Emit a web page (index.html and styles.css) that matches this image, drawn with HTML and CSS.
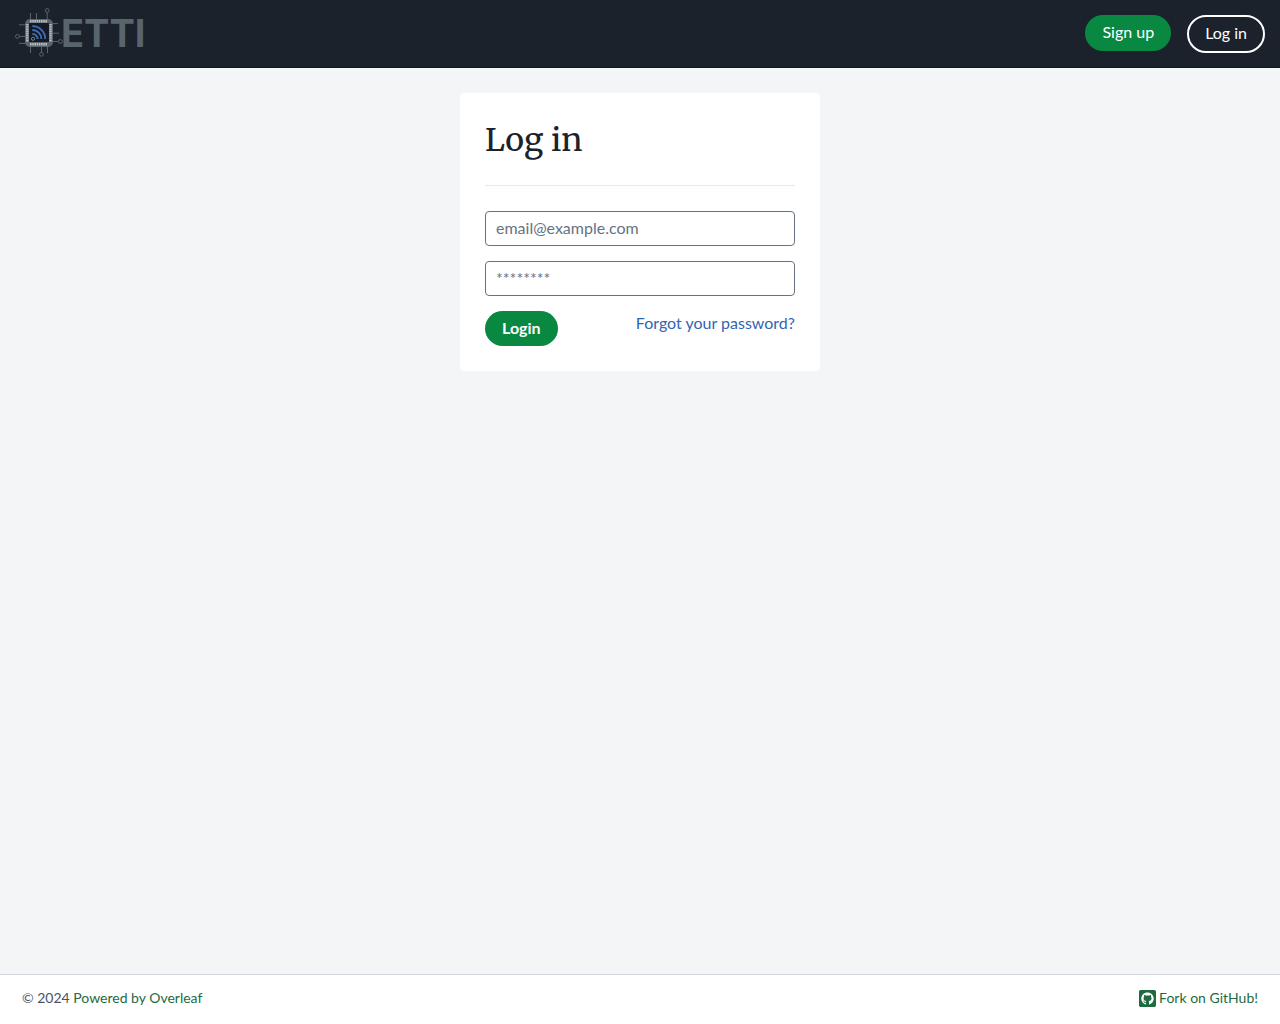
FILE: index.html
```html
<!DOCTYPE html>
<html lang="en">
<head>
    <meta charset="UTF-8">
    <meta name="viewport" content="width=device-width, initial-scale=1">
    <title>Log in - ETTI</title>
    <link rel="stylesheet" href="styles.css">
</head>
<body>
    <header class="navbar">
        <a class="navbar-brand" href="/" aria-label="ETTI">
            <svg class="logo" viewBox="15 6 130 54" width="130" height="54">
                <!-- traces -->
                <g fill="none" stroke="#59656c" stroke-width="1">
                    <path d="M30.5 13v7M36.5 13v7M47.2 12.5v7M30.5 46v7M41.5 46v6M47.5 46v7"/>
                    <path d="M19 24.8h7M19.5 36.4h6M19 43.4h7M51 23.6h7M51 33.2h8M51 41.5h7"/>
                    <circle cx="47.2" cy="10.5" r="1.9"/>
                    <circle cx="17.4" cy="36.4" r="1.9"/>
                    <circle cx="60.4" cy="41.5" r="1.9"/>
                    <circle cx="41.5" cy="54.3" r="1.9"/>
                </g>
                <!-- chip -->
                <rect x="25" y="19" width="28" height="28" rx="5" fill="#59656c"/>
                <rect x="29" y="23" width="20" height="19" fill="#151a24"/>
                <g fill="none" stroke="#b4bbbe" stroke-width="2.5" stroke-dasharray="1.6 .6">
                    <path d="M30 21.3h17.5M30 44.3h17.5M27.3 24v18M50.5 24v18"/>
                </g>
                <g fill="none" stroke="#3e70bd" stroke-width="1.8">
                    <path d="M32.3 26.2A12.6 12.6 0 0 1 45.2 39"/>
                    <path d="M32.3 30A9 9 0 0 1 41.4 39"/>
                    <path d="M32.3 33.8A5.3 5.3 0 0 1 37.7 39"/>
                </g>
                <circle cx="33" cy="38.8" r="1.6" fill="#151a24" stroke="#75828a"/>
                <text class="logo-text" x="61" y="47">ETTI</text>
            </svg>
        </a>
        <nav class="navbar-links">
            <a class="btn btn-primary" href="/register">Sign up</a>
            <a class="btn btn-outline" href="/login">Log in</a>
        </nav>
    </header>

    <main class="content">
        <div class="card">
            <h1 class="page-header">Log in</h1>
            <form class="login-form" action="/login" method="post">
                <input class="form-control" type="email" name="email" placeholder="email@example.com" aria-label="Email">
                <input class="form-control" type="password" name="password" placeholder="********" aria-label="Password">
                <div class="actions">
                    <button class="btn btn-primary btn-login" type="submit">Login</button>
                    <a class="forgot" href="/user/password/reset">Forgot your password?</a>
                </div>
            </form>
        </div>
    </main>

    <footer class="site-footer">
        <div>© 2024 <a href="https://www.overleaf.com">Powered by Overleaf</a></div>
        <a class="fork" href="https://github.com/overleaf/overleaf">
            <svg viewBox="0 32 448 448" width="17" height="17" aria-hidden="true"><path fill="currentColor" d="M400 32H48C21.5 32 0 53.5 0 80v352c0 26.5 21.5 48 48 48h352c26.5 0 48-21.5 48-48V80c0-26.5-21.5-48-48-48zM277.3 415.7c-8.4 1.5-11.5-3.7-11.5-8 0-5.4.2-33 .2-55.3 0-15.6-5.2-25.5-11.3-30.7 37-4.1 76-9.2 76-73.1 0-18.2-6.5-27.3-17.1-39 1.7-4.3 7.4-22-1.7-45-13.9-4.3-45.7 17.9-45.7 17.9-13.2-3.7-27.5-5.6-41.6-5.6-14.1 0-28.4 1.9-41.6 5.6 0 0-31.8-22.2-45.7-17.9-9.1 22.9-3.5 40.6-1.7 45-10.6 11.7-15.6 20.8-15.6 39 0 63.6 37.3 69 74.3 73.1-4.8 4.3-9.1 11.7-10.6 22.3-9.5 4.3-33.8 11.7-48.3-13.9-9.1-15.8-25.5-17.1-25.5-17.1-16.2-.2-1.1 10.2-1.1 10.2 10.8 5 18.4 24.2 18.4 24.2 9.7 29.7 56.1 19.7 56.1 19.7 0 13.9.2 36.5.2 40.6 0 4.3-3 9.5-11.5 8-66-22.1-112.2-84.9-112.2-158.3 0-91.8 70.2-161.5 162-161.5S388 165.6 388 257.4c.1 73.4-44.7 136.3-110.7 158.3z"/></svg>
            <span>Fork on GitHub!</span>
        </a>
    </footer>
</body>
</html>
```
FILE: styles.css
```css
* {
    box-sizing: border-box;
}

body {
    margin: 0;
    min-height: 100vh;
    display: flex;
    flex-direction: column;
    background: #f4f5f6;
    color: #495365;
    font-family: Lato, sans-serif;
    font-size: 16px;
    line-height: 24px;
}

a {
    text-decoration: none;
}

.navbar {
    display: flex;
    justify-content: space-between;
    align-items: flex-start;
    min-height: 68px;
    padding: 6px 15px;
    background: #1b222c;
    border-bottom: 1px solid #121820;
}

.navbar-brand,
.logo {
    display: block;
}

.logo-text {
    fill: #59656c;
    font-family: Inter, sans-serif;
    font-size: 38px;
    font-weight: 700;
}

.navbar-links {
    display: flex;
    align-items: flex-start;
    gap: 16px;
    padding-top: 9px;
}

.btn {
    display: inline-block;
    padding: 5px 17px 6px;
    border: 0;
    border-radius: 20px;
    font: inherit;
    color: #fff;
    cursor: pointer;
}

.btn-primary {
    background: #098842;
}

.navbar-links .btn-primary {
    padding-bottom: 7px;
}

.btn-outline {
    padding: 4px 16px 6px;
    border: 2px solid #fff;
}

.content {
    flex: 1;
    padding: 25px 15px;
}

.card {
    max-width: 360px;
    margin: 0 auto;
    padding: 25px;
    background: #fff;
    border-radius: 4px;
}

.page-header {
    margin: 0 0 25px;
    padding-bottom: 23px;
    border-bottom: 1px solid #e7e9ee;
    color: #1b222c;
    font-family: Merriweather, "DejaVu Serif", serif;
    font-size: 32px;
    font-weight: 400;
    line-height: 44px;
}

.login-form {
    display: flex;
    flex-direction: column;
    gap: 15px;
}

.form-control {
    width: 100%;
    height: 35px;
    padding: 4px 10px 6px;
    border: 1px solid #677283;
    border-radius: 4px;
    background: #fff;
    color: #495365;
    font: inherit;
}

.form-control::placeholder {
    color: #677283;
}

.actions {
    display: flex;
    justify-content: space-between;
    align-items: flex-start;
}

.btn-login {
    font-weight: 700;
}

.forgot {
    color: #3265b2;
}

.site-footer {
    display: flex;
    justify-content: space-between;
    align-items: center;
    min-height: 50px;
    padding: 0 22px 3px;
    background: #fff;
    border-top: 1px solid #d0d5dd;
    font-size: 14px;
}

.site-footer a {
    color: #1e6b41;
}

.fork {
    display: flex;
    align-items: center;
    gap: 3px;
}
```
